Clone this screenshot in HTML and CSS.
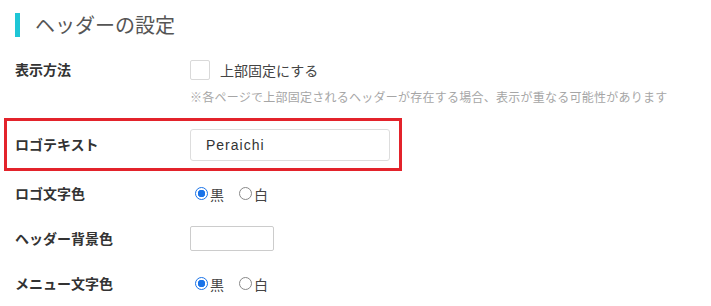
FILE: index.html
```html
<!DOCTYPE html>
<html lang="ja">

<head>
  <meta charset="UTF-8">
  <meta name="viewport" content="width=device-width, initial-scale=1.0">
  <title>ヘッダーの設定</title>
  <link rel="stylesheet" href="styles.css">
</head>

<body>
  <div class="settings">
    <h2 class="settings-title">ヘッダーの設定</h2>

    <div class="row row-fixed">
      <div class="row-label">表示方法</div>
      <div class="row-control">
        <label class="check">
          <input type="checkbox">
          <span class="check-box"></span>
          <span>上部固定にする</span>
        </label>
      </div>
    </div>
    <p class="note">※各ページで上部固定されるヘッダーが存在する場合、表示が重なる可能性があります</p>

    <div class="row row-highlight">
      <div class="row-label">ロゴテキスト</div>
      <div class="row-control">
        <input type="text" class="text-input" value="Peraichi">
      </div>
    </div>

    <div class="row">
      <div class="row-label">ロゴ文字色</div>
      <div class="row-control">
        <label class="radio"><input type="radio" name="logoColor" checked><span class="radio-dot"></span>黒</label>
        <label class="radio"><input type="radio" name="logoColor"><span class="radio-dot"></span>白</label>
      </div>
    </div>

    <div class="row">
      <div class="row-label">ヘッダー背景色</div>
      <div class="row-control">
        <span class="color-box"></span>
      </div>
    </div>

    <div class="row">
      <div class="row-label">メニュー文字色</div>
      <div class="row-control">
        <label class="radio"><input type="radio" name="menuColor" checked><span class="radio-dot"></span>黒</label>
        <label class="radio"><input type="radio" name="menuColor"><span class="radio-dot"></span>白</label>
      </div>
    </div>
  </div>
</body>

</html>
```

FILE: styles.css
```css
body {
  margin: 0;
  padding: 0;
  background: #fff;
  font-family: "Noto Sans CJK JP", "Noto Sans", sans-serif;
  color: #333;
}

.settings {
  padding: 13px 0 0 15px;
}

.settings-title {
  margin: 0;
  height: 24px;
  line-height: 24px;
  padding-left: 15px;
  border-left: 5px solid #1ec6d6;
  font-size: 20px;
  font-weight: normal;
  color: #555;
}

.row {
  display: flex;
  align-items: center;
  height: 45px;
}

.row-fixed {
  height: 20px;
  margin-top: 23px;
}

.row-label {
  width: 175px;
  flex-shrink: 0;
  margin-top: -2px;
  font-size: 14px;
  font-weight: bold;
  color: #333;
}

.row-control {
  display: flex;
  align-items: center;
}

.note {
  margin: 9px 0 0 175px;
  font-size: 12px;
  line-height: 16px;
  letter-spacing: 0.25px;
  color: #a6a6a6;
}

.row-highlight {
  box-sizing: border-box;
  width: 398px;
  height: 53px;
  margin: 13px 0 0 -11px;
  padding-left: 8px;
  border: 3px solid #e3232b;
}

.text-input {
  box-sizing: border-box;
  width: 200px;
  height: 32px;
  padding: 0 15px;
  border: 1px solid #ddd;
  border-radius: 3px;
  font-family: "Liberation Sans", Arial, sans-serif;
  font-size: 14px;
  letter-spacing: 1px;
  color: #333;
}

.check {
  display: flex;
  align-items: center;
  font-size: 14px;
  color: #444;
}

.check input,
.radio input {
  display: none;
}

.check-box {
  width: 20px;
  height: 20px;
  box-sizing: border-box;
  border: 1px solid #d9d9d9;
  border-radius: 2px;
  margin-right: 10px;
}

.radio {
  display: flex;
  align-items: center;
  font-size: 14px;
  color: #444;
  margin-right: 10px;
}

.radio-dot {
  width: 13px;
  height: 13px;
  box-sizing: border-box;
  border: 1px solid #888;
  border-radius: 50%;
  margin: 0 2px 0 5px;
}

.radio input:checked + .radio-dot {
  border-color: #1a73e8;
  background: radial-gradient(circle, #1a73e8 0 3.5px, #fff 4px);
}

.color-box {
  display: block;
  width: 84px;
  height: 25px;
  box-sizing: border-box;
  border: 1px solid #ccc;
  border-radius: 2px;
}
```
